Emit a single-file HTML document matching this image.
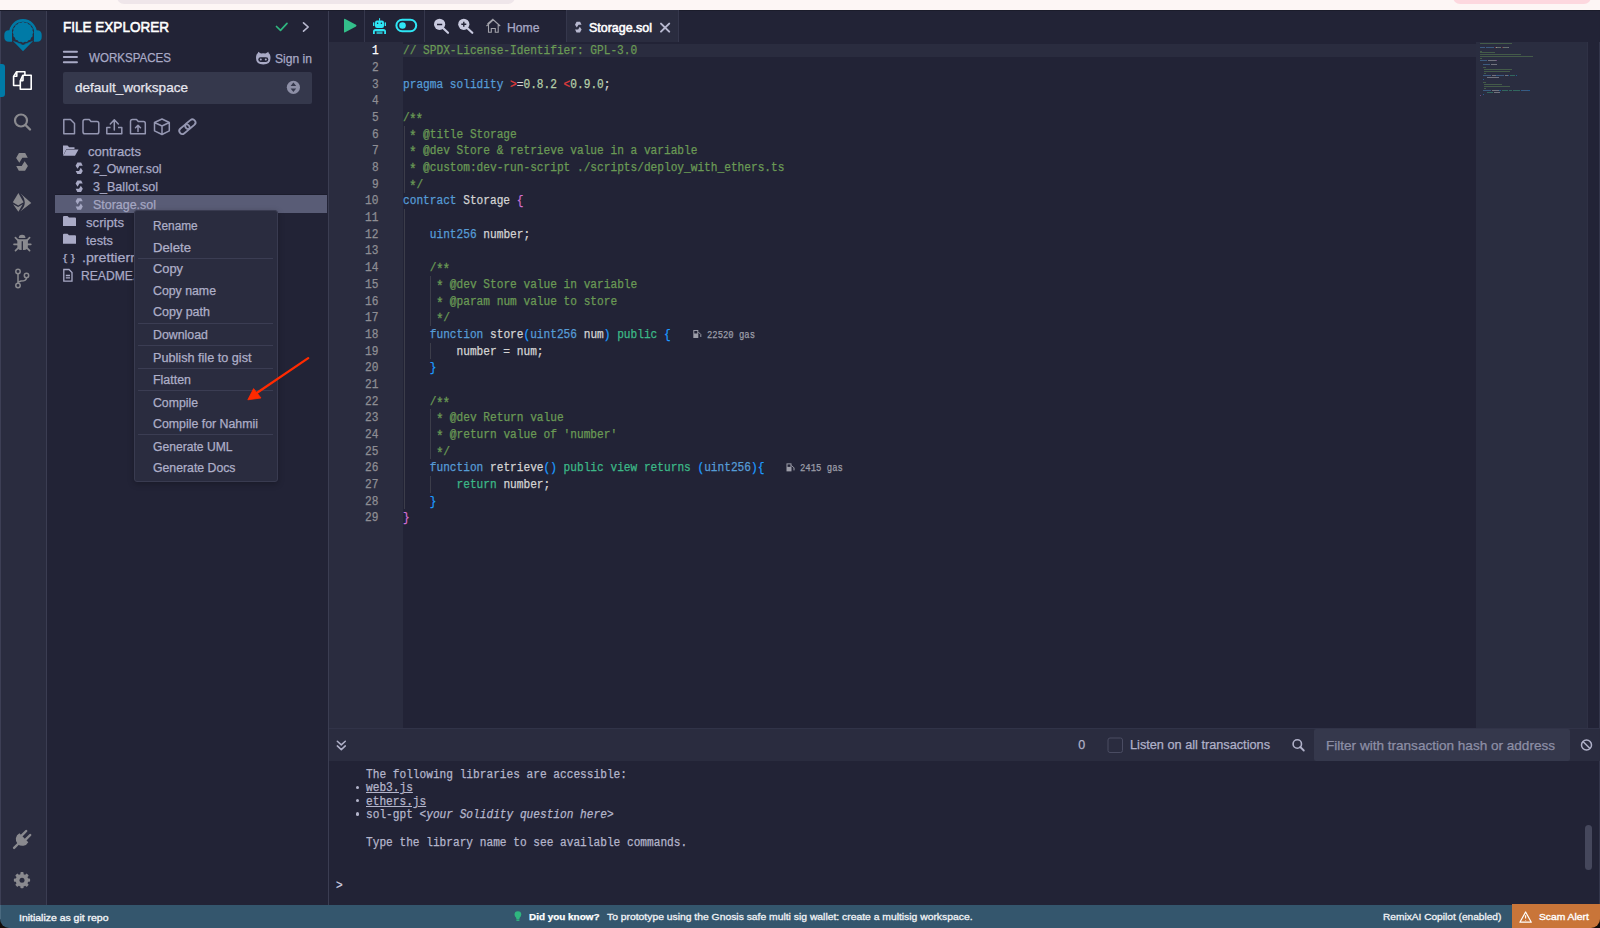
<!DOCTYPE html>
<html><head><meta charset="utf-8">
<style>
*{box-sizing:border-box;margin:0;padding:0}
html,body{width:1600px;height:928px;overflow:hidden;background:#120c0a}
body{position:relative;font-family:"Liberation Sans",sans-serif;color:#babbcc}
div,span,svg{position:absolute}
.t{white-space:pre;line-height:1;-webkit-text-stroke-width:0.25px}
svg{overflow:visible}
.cl span{position:static}
</style></head><body>

<div style="left:0;top:0;width:1600px;height:10px;background:#fdf6f5"></div>
<div style="left:117px;top:-10px;width:398px;height:14px;background:#efe6ea;border-radius:7px"></div>
<div style="left:1453px;top:-10px;width:138px;height:14px;background:#fdd8df;border-radius:7px"></div>
<div style="left:0;top:10px;width:46px;height:895px;background:#2a2c3f"></div>
<div style="left:0;top:10px;width:1px;height:895px;background:#3d3f55"></div>
<div style="left:46px;top:10px;width:1px;height:895px;background:#3b3d52"></div>
<div style="left:47px;top:10px;width:281px;height:895px;background:#222336"></div>
<div style="left:328px;top:10px;width:1px;height:895px;background:#3b3d52"></div>
<div style="left:329px;top:10px;width:1271px;height:895px;background:#222336"></div>
<div style="left:0;top:10px;width:1600px;height:1px;background:#1b1c2b"></div>
<svg style="left:0;top:0" width="46" height="60" viewBox="0 0 46 60">
<path d="M10.4 33 A12.6 12.6 0 0 1 35.6 33" fill="none" stroke="#007aa6" stroke-width="2.7"/>
<path d="M9 30.3 Q4.3 30.3 4.3 35 V37 Q4.3 41.8 9 41.8 H12 V30.3 Z" fill="#007aa6"/>
<path d="M37 30.3 Q41.7 30.3 41.7 35 V37 Q41.7 41.8 37 41.8 H34 V30.3 Z" fill="#007aa6"/>
<path d="M13.5 41.5 L23 51.2 L32.5 41.5 L23 45 Z" fill="#007aa6"/>
<path d="M33.50 32.30 L32.51 34.19 L32.70 36.32 L31.07 37.69 L30.42 39.72 L28.39 40.37 L27.02 42.00 L24.89 41.81 L23.00 42.80 L21.11 41.81 L18.98 42.00 L17.61 40.37 L15.58 39.72 L14.93 37.69 L13.30 36.32 L13.49 34.19 L12.50 32.30 L13.49 30.41 L13.30 28.28 L14.93 26.91 L15.58 24.88 L17.61 24.23 L18.98 22.60 L21.11 22.79 L23.00 21.80 L24.89 22.79 L27.02 22.60 L28.39 24.23 L30.42 24.88 L31.07 26.91 L32.70 28.28 L32.51 30.41 Z" fill="#007aa6"/>
<path d="M12 40.5 Q23 48 34 40.5 L23 44.5 Z" fill="#007aa6"/>
</svg>
<div style="left:0;top:64px;width:5px;height:33px;background:#007aa6;border-radius:0 3px 3px 0"></div>
<svg style="left:0;top:0" width="46" height="100" viewBox="0 0 46 100" fill="none" stroke="#fff" stroke-width="1.6" stroke-linejoin="round">
<path d="M20.3 85.5 H13.6 V76.4 L16.6 71.7 H24.9 V75.2"/>
<path d="M13.8 76.2 H16.8 V72"/>
<path d="M22.8 75.3 H31.2 V89.2 H20.3 V80.8 Z"/>
<path d="M20.5 80.6 H23 V75.6"/>
</svg>
<svg style="left:0;top:0" width="46" height="140" viewBox="0 0 46 140">
<circle cx="21" cy="120.5" r="6" fill="none" stroke="#8a8a8f" stroke-width="2.2"/>
<path d="M25.5 125 L30 129.5" stroke="#8a8a8f" stroke-width="2.4" stroke-linecap="round"/>
</svg>
<svg style="left:0;top:0" width="46" height="220" viewBox="0 0 46 220">
<path d="M18.4 193.1 L23.6 202.3 L18.2 205.6 L12.8 202.2 Z" fill="#8a8a8f"/>
<path d="M13.1 204.3 L18.1 206.9 L22.8 204.3 L18.4 211.8 Z" fill="#8a8a8f"/>
<path d="M20.5 193.4 L31.3 202.9 L20.2 211.6 Q24.8 207 24.8 202.6 Q24.8 198 20.5 193.4 Z" fill="#8a8a8f"/>
</svg>
<svg style="left:0;top:0" width="46" height="260" viewBox="0 0 46 260">
<path d="M18.7 238.1 A3.4 3.4 0 0 1 25.5 238.1 Z" fill="#8a8a8f"/>
<path d="M17.3 239.3 H27.9 V246 Q27.9 250 24 250 H20.8 Q17.3 250 17.3 246 Z" fill="#8a8a8f"/>
<path d="M15.4 237.6 L18.6 240.8 M29.6 237.6 L26.6 240.8 M14 244.3 L17.8 244.3 M30.8 244.3 L27.4 244.3 M15.5 250.6 L18.8 247.3 M29.6 250.6 L26.4 247.3" stroke="#8a8a8f" stroke-width="1.7" stroke-linecap="round"/>
<path d="M22.3 241.2 L22.3 250.5" stroke="#2a2c3f" stroke-width="1.3"/>
</svg>
<svg style="left:0;top:0" width="46" height="300" viewBox="0 0 46 300">
<circle cx="18" cy="271.5" r="2.2" fill="none" stroke="#8a8a8f" stroke-width="1.5"/>
<circle cx="26.5" cy="275.5" r="2.2" fill="none" stroke="#8a8a8f" stroke-width="1.5"/>
<circle cx="18" cy="285.5" r="2.2" fill="none" stroke="#8a8a8f" stroke-width="1.5"/>
<path d="M18 273.7 L18 283.3 M26.5 277.7 Q26.5 281 21 281 L18.5 282" fill="none" stroke="#8a8a8f" stroke-width="1.5"/>
</svg>
<svg style="left:0;top:0" width="46" height="900" viewBox="0 0 46 900">
<path d="M19.42 833.32 L28.28 842.18 A6.6 6.6 0 1 1 19.42 833.32 Z" fill="#8a8a8f"/>
<path d="M21.6 835.6 L26.2 831 M25.6 839.6 L30.2 835 M18.5 843.5 L14.1 847.9" stroke="#8a8a8f" stroke-width="2.4" stroke-linecap="round"/>
</svg>
<svg style="left:0;top:0" width="46" height="900" viewBox="0 0 46 900">
<g transform="translate(22 880.2)">
<circle r="6.3" fill="#8a8a8f"/><rect x="-1.6" y="-8.1" width="3.2" height="4" rx="0.8" transform="rotate(0)" fill="#8a8a8f"/><rect x="-1.6" y="-8.1" width="3.2" height="4" rx="0.8" transform="rotate(45)" fill="#8a8a8f"/><rect x="-1.6" y="-8.1" width="3.2" height="4" rx="0.8" transform="rotate(90)" fill="#8a8a8f"/><rect x="-1.6" y="-8.1" width="3.2" height="4" rx="0.8" transform="rotate(135)" fill="#8a8a8f"/><rect x="-1.6" y="-8.1" width="3.2" height="4" rx="0.8" transform="rotate(180)" fill="#8a8a8f"/><rect x="-1.6" y="-8.1" width="3.2" height="4" rx="0.8" transform="rotate(225)" fill="#8a8a8f"/><rect x="-1.6" y="-8.1" width="3.2" height="4" rx="0.8" transform="rotate(270)" fill="#8a8a8f"/><rect x="-1.6" y="-8.1" width="3.2" height="4" rx="0.8" transform="rotate(315)" fill="#8a8a8f"/>
<circle r="2.5" fill="#2a2c3f"/>
</g></svg>
<div class="t" style="left:62.50px;top:19.45px;font-family:'Liberation Sans';font-size:15px;color:#ffffff;font-weight:normal;font-style:normal;transform-origin:0 0;transform:scaleX(0.9018);-webkit-text-stroke:0.6px #fff;">FILE EXPLORER</div>
<svg style="left:0;top:0" width="330" height="70">
<path d="M276.5 26.5 L280.5 30.3 L287 23.3" fill="none" stroke="#2fb67f" stroke-width="1.7" stroke-linecap="round" stroke-linejoin="round"/>
<path d="M303.5 22.8 L308.2 27 L303.5 31.2" fill="none" stroke="#b9b9d0" stroke-width="1.6" stroke-linecap="round" stroke-linejoin="round"/>
<path d="M63.8 51.8 H77 M63.8 57 H77 M63.8 62.2 H77" stroke="#a9aac6" stroke-width="1.9" stroke-linecap="round"/>
<path d="M256 58 Q256 54 258 53 L258 51.8 L261 53.5 Q263 53 265.5 53.5 L268.5 51.8 L268.5 53 Q270.5 54 270.5 58 Q270.5 64.5 263.3 64.5 Q256 64.5 256 58 Z" fill="#a9aac6"/>
<rect x="258.3" y="57.3" width="10" height="4.6" rx="2.3" fill="#222336"/>
<circle cx="260.8" cy="59.6" r="1" fill="#a9aac6"/><circle cx="265.8" cy="59.6" r="1" fill="#a9aac6"/>
</svg>
<div class="t" style="left:88.90px;top:50.85px;font-family:'Liberation Sans';font-size:13px;color:#a9aac6;font-weight:normal;font-style:normal;transform-origin:0 0;transform:scaleX(0.8892);">WORKSPACES</div>
<div class="t" style="left:275.20px;top:51.85px;font-family:'Liberation Sans';font-size:13px;color:#a9aac6;font-weight:normal;font-style:normal;transform-origin:0 0;transform:scaleX(0.9308);">Sign in</div>
<div style="left:63px;top:71.5px;width:248.5px;height:32px;background:#35384c;border-radius:2px"></div>
<div class="t" style="left:74.90px;top:80.83px;font-family:'Liberation Sans';font-size:13.5px;color:#e6e6ee;font-weight:normal;font-style:normal;transform-origin:0 0;transform:scaleX(1.0037);">default_workspace</div>
<svg style="left:0;top:0" width="330" height="140">
<circle cx="293.4" cy="87.3" r="6.6" fill="#8d8fa6"/>
<path d="M290.6 86 L293.4 82.6 L296.2 86 Z M290.6 88.6 L293.4 92 L296.2 88.6 Z" fill="#35384c"/>
</svg>
<svg style="left:0;top:0" width="330" height="140" fill="none" stroke="#9597b2" stroke-width="1.5" stroke-linejoin="round">
<path d="M63.8 119.5 H70.5 L74.5 123.5 V133.8 H63.8 Z"/>
<path d="M83 121.5 Q83 119.5 85 119.5 H89.3 L91 121.5 H97 Q98.8 121.5 98.8 123.5 V132 Q98.8 133.8 97 133.8 H85 Q83 133.8 83 132 Z"/>
<path d="M114.3 130 V120 M110.3 124 L114.3 119.8 L118.3 124" stroke-linecap="round"/>
<path d="M110.5 127.5 H106.8 V133.8 H121.8 V127.5 H118"/>
<path d="M130.5 121.5 Q130.5 119.5 132.5 119.5 H136.5 L138.3 121.5 H143.5 Q145.3 121.5 145.3 123.5 V133.8 H130.5 Z"/>
<path d="M138 131.5 V125.3 M135.5 127.8 L138 125.3 L140.5 127.8" stroke-linecap="round"/>
<path d="M162 119 L169.3 122.5 V130.8 L162 134.5 L154.5 130.8 V122.5 Z M154.5 122.5 L162 126 L169.3 122.5 M162 126 V134.5"/>
<g transform="translate(187.4 126.7) rotate(-40)" stroke-width="1.8">
<rect x="-9.6" y="-3.1" width="11.5" height="6.2" rx="3.1"/>
<rect x="-1.9" y="-3.1" width="11.5" height="6.2" rx="3.1"/>
</g>
</svg>
<div style="left:55px;top:194px;width:272px;height:1px;background:#1c1d2d"></div>
<div style="left:55px;top:195px;width:272px;height:18.2px;background:#595c76"></div>
<svg style="left:0;top:0" width="330" height="300">
<path d="M63 145.5 H67.5 L69.2 147.3 H74.5 V149 H66.5 L63 155.8 Z" fill="#a9aac6"/>
<path d="M66.5 149.5 H78.5 L75 155.8 H63.2 Z" fill="#a9aac6"/>
</svg>
<svg style="left:0;top:0" width="700" height="300"><path d="M18.95 153.00 L25.19 153.00 L27.78 157.77 L22.33 157.77 L19.35 162.69 L16.10 157.91 Z M25.05 170.82 L18.82 170.82 L16.23 166.05 L21.68 166.05 L24.66 161.14 L27.91 165.91 Z" fill="#8a8a8f"/></svg>
<svg style="left:0;top:0" width="700" height="300"><path d="M77.34 162.60 L81.14 162.60 L82.72 165.68 L79.40 165.68 L77.58 168.85 L75.60 165.77 Z M81.06 174.10 L77.26 174.10 L75.68 171.02 L79.00 171.02 L80.82 167.85 L82.80 170.93 Z" fill="#a9aac6"/></svg>
<svg style="left:0;top:0" width="700" height="300"><path d="M77.34 180.40 L81.14 180.40 L82.72 183.48 L79.40 183.48 L77.58 186.65 L75.60 183.57 Z M81.06 191.90 L77.26 191.90 L75.68 188.82 L79.00 188.82 L80.82 185.65 L82.80 188.73 Z" fill="#a9aac6"/></svg>
<svg style="left:0;top:0" width="700" height="300"><path d="M77.34 198.20 L81.14 198.20 L82.72 201.28 L79.40 201.28 L77.58 204.45 L75.60 201.37 Z M81.06 209.70 L77.26 209.70 L75.68 206.62 L79.00 206.62 L80.82 203.45 L82.80 206.53 Z" fill="#a5a7c3"/></svg>
<div class="t" style="left:87.50px;top:144.75px;font-family:'Liberation Sans';font-size:13px;color:#a9aac6;font-weight:normal;font-style:normal;transform-origin:0 0;transform:scaleX(1.0047);">contracts</div>
<div class="t" style="left:93.10px;top:162.05px;font-family:'Liberation Sans';font-size:13px;color:#a9aac6;font-weight:normal;font-style:normal;transform-origin:0 0;transform:scaleX(0.9479);">2_Owner.sol</div>
<div class="t" style="left:93.10px;top:179.85px;font-family:'Liberation Sans';font-size:13px;color:#a9aac6;font-weight:normal;font-style:normal;transform-origin:0 0;transform:scaleX(0.9670);">3_Ballot.sol</div>
<div class="t" style="left:93.10px;top:197.65px;font-family:'Liberation Sans';font-size:13px;color:#a5a7c3;font-weight:normal;font-style:normal;transform-origin:0 0;transform:scaleX(0.9579);">Storage.sol</div>
<svg style="left:0;top:0" width="330" height="300">
<path d="M63 217 Q63 216 64 216 H67.5 L69 217.5 H75 Q76 217.5 76 218.5 V226 H63 Z" fill="#a9aac6"/>
<path d="M63 234.7 Q63 233.7 64 233.7 H67.5 L69 235.2 H75 Q76 235.2 76 236.2 V243.7 H63 Z" fill="#a9aac6"/>
</svg>
<div class="t" style="left:86.20px;top:216.25px;font-family:'Liberation Sans';font-size:13px;color:#a9aac6;font-weight:normal;font-style:normal;transform-origin:0 0;transform:scaleX(1.0116);">scripts</div>
<div class="t" style="left:86.20px;top:233.95px;font-family:'Liberation Sans';font-size:13px;color:#a9aac6;font-weight:normal;font-style:normal;transform-origin:0 0;transform:scaleX(0.9829);">tests</div>
<div class="t" style="left:62.80px;top:252.93px;font-family:'Liberation Sans';font-size:9.5px;color:#a9aac6;font-weight:normal;font-style:normal;transform-origin:0 0;transform:scaleX(1.3333);">{ }</div>
<div class="t" style="left:81.50px;top:250.95px;font-family:'Liberation Sans';font-size:13px;color:#a9aac6;font-weight:normal;font-style:normal;transform-origin:0 0;transform:scaleX(1.0928);">.prettierrc</div>
<svg style="left:0;top:0" width="330" height="300" fill="none" stroke="#a9aac6" stroke-width="1.3">
<path d="M63.8 269.5 H69 L72 272.5 V281.2 H63.8 Z"/><path d="M65.8 275.5 H70 M65.8 277.8 H70" />
</svg>
<div class="t" style="left:81.20px;top:268.65px;font-family:'Liberation Sans';font-size:13px;color:#a9aac6;font-weight:normal;font-style:normal;transform-origin:0 0;transform:scaleX(0.9315);">README.md</div>
<div style="left:133.5px;top:210.2px;width:144px;height:272px;background:#2a2c3f;border:1px solid #393b50;border-radius:3px;box-shadow:0 2px 6px rgba(0,0,0,.25)"></div>
<div class="t" style="left:153.30px;top:219.68px;font-family:'Liberation Sans';font-size:12.5px;color:#aeafc8;font-weight:normal;font-style:normal;transform-origin:0 0;transform:scaleX(0.9460);">Rename</div>
<div class="t" style="left:153.30px;top:241.58px;font-family:'Liberation Sans';font-size:12.5px;color:#aeafc8;font-weight:normal;font-style:normal;transform-origin:0 0;transform:scaleX(1.0514);">Delete</div>
<div class="t" style="left:153.30px;top:263.47px;font-family:'Liberation Sans';font-size:12.5px;color:#aeafc8;font-weight:normal;font-style:normal;transform-origin:0 0;transform:scaleX(1.0278);">Copy</div>
<div class="t" style="left:153.30px;top:284.97px;font-family:'Liberation Sans';font-size:12.5px;color:#aeafc8;font-weight:normal;font-style:normal;transform-origin:0 0;transform:scaleX(0.9853);">Copy name</div>
<div class="t" style="left:153.30px;top:306.47px;font-family:'Liberation Sans';font-size:12.5px;color:#aeafc8;font-weight:normal;font-style:normal;transform-origin:0 0;transform:scaleX(1.0003);">Copy path</div>
<div class="t" style="left:153.30px;top:328.67px;font-family:'Liberation Sans';font-size:12.5px;color:#aeafc8;font-weight:normal;font-style:normal;transform-origin:0 0;transform:scaleX(0.9893);">Download</div>
<div class="t" style="left:153.30px;top:351.67px;font-family:'Liberation Sans';font-size:12.5px;color:#aeafc8;font-weight:normal;font-style:normal;transform-origin:0 0;transform:scaleX(1.0125);">Publish file to gist</div>
<div class="t" style="left:153.30px;top:374.38px;font-family:'Liberation Sans';font-size:12.5px;color:#aeafc8;font-weight:normal;font-style:normal;transform-origin:0 0;transform:scaleX(0.9943);">Flatten</div>
<div class="t" style="left:153.30px;top:396.52px;font-family:'Liberation Sans';font-size:12.5px;color:#aeafc8;font-weight:normal;font-style:normal;transform-origin:0 0;transform:scaleX(0.9813);">Compile</div>
<div class="t" style="left:153.30px;top:418.07px;font-family:'Liberation Sans';font-size:12.5px;color:#aeafc8;font-weight:normal;font-style:normal;transform-origin:0 0;transform:scaleX(0.9879);">Compile for Nahmii</div>
<div class="t" style="left:153.30px;top:440.67px;font-family:'Liberation Sans';font-size:12.5px;color:#aeafc8;font-weight:normal;font-style:normal;transform-origin:0 0;transform:scaleX(0.9697);">Generate UML</div>
<div class="t" style="left:153.30px;top:462.17px;font-family:'Liberation Sans';font-size:12.5px;color:#aeafc8;font-weight:normal;font-style:normal;transform-origin:0 0;transform:scaleX(0.9812);">Generate Docs</div>
<div style="left:138px;top:257.6px;width:135px;height:1px;background:#3b3d53"></div>
<div style="left:138px;top:323.0px;width:135px;height:1px;background:#3b3d53"></div>
<div style="left:138px;top:345.1px;width:135px;height:1px;background:#3b3d53"></div>
<div style="left:138px;top:367.8px;width:135px;height:1px;background:#3b3d53"></div>
<div style="left:138px;top:390.0px;width:135px;height:1px;background:#3b3d53"></div>
<div style="left:138px;top:434.1px;width:135px;height:1px;background:#3b3d53"></div>
<svg style="left:0;top:0" width="330" height="420">
<path d="M308.2 358.1 L256 393.5" stroke="#ff2a00" stroke-width="2.3" stroke-linecap="round"/>
<path d="M247.8 399.8 L253.6 388.6 L261 398 Z" fill="#ff2a00" stroke="#ff2a00" stroke-width="0.8" stroke-linejoin="round"/>
</svg>
<div style="left:364px;top:10px;width:1px;height:32px;background:#35374c"></div>
<div style="left:424px;top:10px;width:1px;height:32px;background:#35374c"></div>
<div style="left:566px;top:10px;width:113px;height:32px;background:#2a2c3f;border-left:1px solid #35374c;border-right:1px solid #35374c"></div>
<svg style="left:0;top:0" width="700" height="42">
<path d="M344 19.5 Q344 18.3 345.2 18.9 L356 24.8 Q357 25.6 356 26.4 L345.2 32.3 Q344 32.9 344 31.7 Z" fill="#33bf8a"/>
<rect x="375" y="20.5" width="9" height="7.5" rx="2" fill="#2ee6f5"/>
<rect x="373" y="22.2" width="1.4" height="3.8" rx="0.6" fill="#2ee6f5"/>
<rect x="384.6" y="22.2" width="1.4" height="3.8" rx="0.6" fill="#2ee6f5"/>
<rect x="379" y="18.2" width="1.1" height="2.5" fill="#2ee6f5"/>
<circle cx="377.6" cy="23.3" r="0.8" fill="#222336"/><circle cx="381.4" cy="23.3" r="0.8" fill="#222336"/>
<path d="M373 34 V31.5 Q373 29 375.5 29 H383.5 Q386 29 386 31.5 V34 H384.2 V31.2 H374.8 V34 Z" fill="#2ee6f5"/>
<rect x="376.5" y="31.5" width="6" height="2.5" fill="#2ee6f5" opacity=".7"/>
<rect x="396.4" y="19.7" width="19.8" height="11.6" rx="5.8" fill="none" stroke="#2ee6f5" stroke-width="2"/>
<circle cx="402.5" cy="25.5" r="3.3" fill="#2ee6f5"/>
<g fill="#c9cadf" stroke="#c9cadf">
<circle cx="439.6" cy="24.3" r="5.6" stroke="none"/>
<path d="M443.5 28.5 L448 32.8" stroke-width="2.2" stroke-linecap="round"/>
<circle cx="463.8" cy="24.3" r="5.6" stroke="none"/>
<path d="M467.7 28.5 L472.3 32.8" stroke-width="2.2" stroke-linecap="round"/>
</g>
<path d="M437 24.5 H442.2" stroke="#222336" stroke-width="1.5"/>
<path d="M461.3 24.3 H466.3 M463.8 21.8 V26.8" stroke="#222336" stroke-width="1.4"/>
<path d="M486.5 26 L493.3 19.8 L500.2 26 M488.5 24.5 V32.2 H491.3 V28.5 H495.3 V32.2 H498.2 V24.5 M487.5 24 L493.3 18.8" fill="none" stroke="#a3a3ab" stroke-width="1.1"/>
<path d="M661 23.6 L669.2 31.6 M669.2 23.6 L661 31.6" stroke="#b8b9d0" stroke-width="2" stroke-linecap="round"/>
</svg>
<svg style="left:0;top:0" width="700" height="300"><path d="M576.60 21.80 L580.10 21.80 L581.55 24.63 L578.50 24.63 L576.82 27.55 L575.00 24.72 Z M580.02 32.38 L576.53 32.38 L575.07 29.55 L578.13 29.55 L579.80 26.63 L581.62 29.46 Z" fill="#b8b9d0"/></svg>
<div class="t" style="left:506.80px;top:22.27px;font-family:'Liberation Sans';font-size:12.5px;color:#a9aac6;font-weight:normal;font-style:normal;transform-origin:0 0;transform:scaleX(0.9747);">Home</div>
<div class="t" style="left:589.30px;top:22.27px;font-family:'Liberation Sans';font-size:12.5px;color:#ffffff;font-weight:normal;font-style:normal;transform-origin:0 0;transform:scaleX(0.9963);-webkit-text-stroke:0.55px #fff;">Storage.sol</div>
<div style="left:329px;top:42px;width:74px;height:686px;background:#2a2c3f"></div>
<div style="left:1476px;top:42px;width:111px;height:686px;background:#2a2d40"></div>
<div style="left:1587px;top:42px;width:1px;height:686px;background:#2f3145"></div>
<div style="left:1599px;top:42px;width:1px;height:863px;background:#33354a"></div>
<div style="left:403px;top:43.5px;width:1073px;height:13.5px;background:#2a2c3f"></div>
<div class="t" style="left:372.11px;top:45.38px;font-family:'Liberation Mono';font-size:12px;color:#ffffff;transform:scaleX(0.9292);transform-origin:0 0">1</div>
<div class="t" style="left:372.11px;top:62.05px;font-family:'Liberation Mono';font-size:12px;color:#8e8e94;transform:scaleX(0.9292);transform-origin:0 0">2</div>
<div class="t" style="left:372.11px;top:78.73px;font-family:'Liberation Mono';font-size:12px;color:#8e8e94;transform:scaleX(0.9292);transform-origin:0 0">3</div>
<div class="t" style="left:372.11px;top:95.41px;font-family:'Liberation Mono';font-size:12px;color:#8e8e94;transform:scaleX(0.9292);transform-origin:0 0">4</div>
<div class="t" style="left:372.11px;top:112.08px;font-family:'Liberation Mono';font-size:12px;color:#8e8e94;transform:scaleX(0.9292);transform-origin:0 0">5</div>
<div class="t" style="left:372.11px;top:128.75px;font-family:'Liberation Mono';font-size:12px;color:#8e8e94;transform:scaleX(0.9292);transform-origin:0 0">6</div>
<div class="t" style="left:372.11px;top:145.43px;font-family:'Liberation Mono';font-size:12px;color:#8e8e94;transform:scaleX(0.9292);transform-origin:0 0">7</div>
<div class="t" style="left:372.11px;top:162.11px;font-family:'Liberation Mono';font-size:12px;color:#8e8e94;transform:scaleX(0.9292);transform-origin:0 0">8</div>
<div class="t" style="left:372.11px;top:178.78px;font-family:'Liberation Mono';font-size:12px;color:#8e8e94;transform:scaleX(0.9292);transform-origin:0 0">9</div>
<div class="t" style="left:365.42px;top:195.46px;font-family:'Liberation Mono';font-size:12px;color:#8e8e94;transform:scaleX(0.9292);transform-origin:0 0">10</div>
<div class="t" style="left:365.42px;top:212.13px;font-family:'Liberation Mono';font-size:12px;color:#8e8e94;transform:scaleX(0.9292);transform-origin:0 0">11</div>
<div class="t" style="left:365.42px;top:228.81px;font-family:'Liberation Mono';font-size:12px;color:#8e8e94;transform:scaleX(0.9292);transform-origin:0 0">12</div>
<div class="t" style="left:365.42px;top:245.48px;font-family:'Liberation Mono';font-size:12px;color:#8e8e94;transform:scaleX(0.9292);transform-origin:0 0">13</div>
<div class="t" style="left:365.42px;top:262.15px;font-family:'Liberation Mono';font-size:12px;color:#8e8e94;transform:scaleX(0.9292);transform-origin:0 0">14</div>
<div class="t" style="left:365.42px;top:278.83px;font-family:'Liberation Mono';font-size:12px;color:#8e8e94;transform:scaleX(0.9292);transform-origin:0 0">15</div>
<div class="t" style="left:365.42px;top:295.50px;font-family:'Liberation Mono';font-size:12px;color:#8e8e94;transform:scaleX(0.9292);transform-origin:0 0">16</div>
<div class="t" style="left:365.42px;top:312.18px;font-family:'Liberation Mono';font-size:12px;color:#8e8e94;transform:scaleX(0.9292);transform-origin:0 0">17</div>
<div class="t" style="left:365.42px;top:328.86px;font-family:'Liberation Mono';font-size:12px;color:#8e8e94;transform:scaleX(0.9292);transform-origin:0 0">18</div>
<div class="t" style="left:365.42px;top:345.53px;font-family:'Liberation Mono';font-size:12px;color:#8e8e94;transform:scaleX(0.9292);transform-origin:0 0">19</div>
<div class="t" style="left:365.42px;top:362.20px;font-family:'Liberation Mono';font-size:12px;color:#8e8e94;transform:scaleX(0.9292);transform-origin:0 0">20</div>
<div class="t" style="left:365.42px;top:378.88px;font-family:'Liberation Mono';font-size:12px;color:#8e8e94;transform:scaleX(0.9292);transform-origin:0 0">21</div>
<div class="t" style="left:365.42px;top:395.56px;font-family:'Liberation Mono';font-size:12px;color:#8e8e94;transform:scaleX(0.9292);transform-origin:0 0">22</div>
<div class="t" style="left:365.42px;top:412.23px;font-family:'Liberation Mono';font-size:12px;color:#8e8e94;transform:scaleX(0.9292);transform-origin:0 0">23</div>
<div class="t" style="left:365.42px;top:428.91px;font-family:'Liberation Mono';font-size:12px;color:#8e8e94;transform:scaleX(0.9292);transform-origin:0 0">24</div>
<div class="t" style="left:365.42px;top:445.58px;font-family:'Liberation Mono';font-size:12px;color:#8e8e94;transform:scaleX(0.9292);transform-origin:0 0">25</div>
<div class="t" style="left:365.42px;top:462.25px;font-family:'Liberation Mono';font-size:12px;color:#8e8e94;transform:scaleX(0.9292);transform-origin:0 0">26</div>
<div class="t" style="left:365.42px;top:478.93px;font-family:'Liberation Mono';font-size:12px;color:#8e8e94;transform:scaleX(0.9292);transform-origin:0 0">27</div>
<div class="t" style="left:365.42px;top:495.61px;font-family:'Liberation Mono';font-size:12px;color:#8e8e94;transform:scaleX(0.9292);transform-origin:0 0">28</div>
<div class="t" style="left:365.42px;top:512.28px;font-family:'Liberation Mono';font-size:12px;color:#8e8e94;transform:scaleX(0.9292);transform-origin:0 0">29</div>
<div class="t cl" style="left:402.6px;top:45.38px;font-family:'Liberation Mono';font-size:12px;transform:scaleX(0.9292);transform-origin:0 0"><span style="color:#6a9a55">// SPDX-License-Identifier: GPL-3.0</span></div>
<div class="t cl" style="left:402.6px;top:78.73px;font-family:'Liberation Mono';font-size:12px;transform:scaleX(0.9292);transform-origin:0 0"><span style="color:#569cd6">pragma</span><span style="color:#d4d4d4"> </span><span style="color:#569cd6">solidity</span><span style="color:#d4d4d4"> </span><span style="color:#e03c3c">&gt;</span><span style="color:#d4d4d4">=</span><span style="color:#b5cea8">0.8.2</span><span style="color:#d4d4d4"> </span><span style="color:#e03c3c">&lt;</span><span style="color:#b5cea8">0.9.0</span><span style="color:#d4d4d4">;</span></div>
<div class="t cl" style="left:402.6px;top:112.08px;font-family:'Liberation Mono';font-size:12px;transform:scaleX(0.9292);transform-origin:0 0"><span style="color:#6a9a55">/<span style="display:inline-block;transform:translateY(2.3px) scale(1.15)">*</span><span style="display:inline-block;transform:translateY(2.3px) scale(1.15)">*</span></span></div>
<div class="t cl" style="left:402.6px;top:128.75px;font-family:'Liberation Mono';font-size:12px;transform:scaleX(0.9292);transform-origin:0 0"><span style="color:#6a9a55"> <span style="display:inline-block;transform:translateY(2.3px) scale(1.15)">*</span> @title Storage</span></div>
<div class="t cl" style="left:402.6px;top:145.43px;font-family:'Liberation Mono';font-size:12px;transform:scaleX(0.9292);transform-origin:0 0"><span style="color:#6a9a55"> <span style="display:inline-block;transform:translateY(2.3px) scale(1.15)">*</span> @dev Store &amp; retrieve value in a variable</span></div>
<div class="t cl" style="left:402.6px;top:162.11px;font-family:'Liberation Mono';font-size:12px;transform:scaleX(0.9292);transform-origin:0 0"><span style="color:#6a9a55"> <span style="display:inline-block;transform:translateY(2.3px) scale(1.15)">*</span> @custom:dev-run-script ./scripts/deploy_with_ethers.ts</span></div>
<div class="t cl" style="left:402.6px;top:178.78px;font-family:'Liberation Mono';font-size:12px;transform:scaleX(0.9292);transform-origin:0 0"><span style="color:#6a9a55"> <span style="display:inline-block;transform:translateY(2.3px) scale(1.15)">*</span>/</span></div>
<div class="t cl" style="left:402.6px;top:195.46px;font-family:'Liberation Mono';font-size:12px;transform:scaleX(0.9292);transform-origin:0 0"><span style="color:#569cd6">contract</span><span style="color:#d4d4d4"> Storage </span><span style="color:#d26fd2">{</span></div>
<div class="t cl" style="left:402.6px;top:228.81px;font-family:'Liberation Mono';font-size:12px;transform:scaleX(0.9292);transform-origin:0 0"><span style="color:#d4d4d4">    </span><span style="color:#569cd6">uint256</span><span style="color:#d4d4d4"> number;</span></div>
<div class="t cl" style="left:402.6px;top:262.15px;font-family:'Liberation Mono';font-size:12px;transform:scaleX(0.9292);transform-origin:0 0"><span style="color:#6a9a55">    /<span style="display:inline-block;transform:translateY(2.3px) scale(1.15)">*</span><span style="display:inline-block;transform:translateY(2.3px) scale(1.15)">*</span></span></div>
<div class="t cl" style="left:402.6px;top:278.83px;font-family:'Liberation Mono';font-size:12px;transform:scaleX(0.9292);transform-origin:0 0"><span style="color:#6a9a55">     <span style="display:inline-block;transform:translateY(2.3px) scale(1.15)">*</span> @dev Store value in variable</span></div>
<div class="t cl" style="left:402.6px;top:295.50px;font-family:'Liberation Mono';font-size:12px;transform:scaleX(0.9292);transform-origin:0 0"><span style="color:#6a9a55">     <span style="display:inline-block;transform:translateY(2.3px) scale(1.15)">*</span> @param num value to store</span></div>
<div class="t cl" style="left:402.6px;top:312.18px;font-family:'Liberation Mono';font-size:12px;transform:scaleX(0.9292);transform-origin:0 0"><span style="color:#6a9a55">     <span style="display:inline-block;transform:translateY(2.3px) scale(1.15)">*</span>/</span></div>
<div class="t cl" style="left:402.6px;top:328.86px;font-family:'Liberation Mono';font-size:12px;transform:scaleX(0.9292);transform-origin:0 0"><span style="color:#d4d4d4">    </span><span style="color:#569cd6">function</span><span style="color:#d4d4d4"> store</span><span style="color:#1d9bff">(</span><span style="color:#569cd6">uint256</span><span style="color:#d4d4d4"> num</span><span style="color:#1d9bff">)</span><span style="color:#d4d4d4"> </span><span style="color:#3cb887">public</span><span style="color:#d4d4d4"> </span><span style="color:#1d9bff">{</span></div>
<div class="t cl" style="left:402.6px;top:345.53px;font-family:'Liberation Mono';font-size:12px;transform:scaleX(0.9292);transform-origin:0 0"><span style="color:#d4d4d4">        number = num;</span></div>
<div class="t cl" style="left:402.6px;top:362.20px;font-family:'Liberation Mono';font-size:12px;transform:scaleX(0.9292);transform-origin:0 0"><span style="color:#d4d4d4">    </span><span style="color:#1d9bff">}</span></div>
<div class="t cl" style="left:402.6px;top:395.56px;font-family:'Liberation Mono';font-size:12px;transform:scaleX(0.9292);transform-origin:0 0"><span style="color:#6a9a55">    /<span style="display:inline-block;transform:translateY(2.3px) scale(1.15)">*</span><span style="display:inline-block;transform:translateY(2.3px) scale(1.15)">*</span></span></div>
<div class="t cl" style="left:402.6px;top:412.23px;font-family:'Liberation Mono';font-size:12px;transform:scaleX(0.9292);transform-origin:0 0"><span style="color:#6a9a55">     <span style="display:inline-block;transform:translateY(2.3px) scale(1.15)">*</span> @dev Return value</span></div>
<div class="t cl" style="left:402.6px;top:428.91px;font-family:'Liberation Mono';font-size:12px;transform:scaleX(0.9292);transform-origin:0 0"><span style="color:#6a9a55">     <span style="display:inline-block;transform:translateY(2.3px) scale(1.15)">*</span> @return value of &#x27;number&#x27;</span></div>
<div class="t cl" style="left:402.6px;top:445.58px;font-family:'Liberation Mono';font-size:12px;transform:scaleX(0.9292);transform-origin:0 0"><span style="color:#6a9a55">     <span style="display:inline-block;transform:translateY(2.3px) scale(1.15)">*</span>/</span></div>
<div class="t cl" style="left:402.6px;top:462.25px;font-family:'Liberation Mono';font-size:12px;transform:scaleX(0.9292);transform-origin:0 0"><span style="color:#d4d4d4">    </span><span style="color:#569cd6">function</span><span style="color:#d4d4d4"> retrieve</span><span style="color:#1d9bff">()</span><span style="color:#d4d4d4"> </span><span style="color:#3cb887">public</span><span style="color:#d4d4d4"> </span><span style="color:#3cb887">view</span><span style="color:#d4d4d4"> </span><span style="color:#3cb887">returns</span><span style="color:#d4d4d4"> </span><span style="color:#1d9bff">(</span><span style="color:#569cd6">uint256</span><span style="color:#1d9bff">)</span><span style="color:#1d9bff">{</span></div>
<div class="t cl" style="left:402.6px;top:478.93px;font-family:'Liberation Mono';font-size:12px;transform:scaleX(0.9292);transform-origin:0 0"><span style="color:#d4d4d4">        </span><span style="color:#3cb887">return</span><span style="color:#d4d4d4"> number;</span></div>
<div class="t cl" style="left:402.6px;top:495.61px;font-family:'Liberation Mono';font-size:12px;transform:scaleX(0.9292);transform-origin:0 0"><span style="color:#d4d4d4">    </span><span style="color:#1d9bff">}</span></div>
<div class="t cl" style="left:402.6px;top:512.28px;font-family:'Liberation Mono';font-size:12px;transform:scaleX(0.9292);transform-origin:0 0"><span style="color:#d26fd2">}</span></div>
<div style="left:403.5px;top:209.2px;width:1px;height:300.2px;background:#3c3d4a"></div>
<div style="left:403.5px;top:125.9px;width:1px;height:66.7px;background:#3c3d4a"></div>
<div style="left:430.3px;top:276.0px;width:1px;height:50.0px;background:#3c3d4a"></div>
<div style="left:430.3px;top:409.4px;width:1px;height:50.0px;background:#3c3d4a"></div>
<div style="left:430.3px;top:342.7px;width:1px;height:16.7px;background:#3c3d4a"></div>
<div style="left:430.3px;top:476.1px;width:1px;height:16.7px;background:#3c3d4a"></div>
<svg style="left:0;top:0" width="900" height="520"><path d="M693.3 329.975 H698.3 V337.975 H693.3 Z" fill="#9c9da8"/><rect x="694.3" y="330.975" width="3" height="2.5" fill="#222336"/><path d="M698.3 331.975 L700.8 334.475 V336.975" fill="none" stroke="#9c9da8" stroke-width="1"/></svg>
<div class="t" style="left:706.80px;top:330.68px;font-family:'Liberation Mono';font-size:10px;color:#9c9da8;font-weight:normal;font-style:normal;transform-origin:0 0;transform:scaleX(0.8886);">22520 gas</div>
<svg style="left:0;top:0" width="900" height="520"><path d="M786.5 463.375 H791.5 V471.375 H786.5 Z" fill="#9c9da8"/><rect x="787.5" y="464.375" width="3" height="2.5" fill="#222336"/><path d="M791.5 465.375 L794.0 467.875 V470.375" fill="none" stroke="#9c9da8" stroke-width="1"/></svg>
<div class="t" style="left:800.00px;top:464.07px;font-family:'Liberation Mono';font-size:10px;color:#9c9da8;font-weight:normal;font-style:normal;transform-origin:0 0;transform:scaleX(0.8955);">2415 gas</div>
<div style="left:1479.5px;top:43.0px;width:32.9px;height:1.0px;background:#6a9a55;opacity:.42"></div>
<div style="left:1479.5px;top:46.7px;width:5.6px;height:1.0px;background:#569cd6;opacity:.42"></div>
<div style="left:1486.1px;top:46.7px;width:7.5px;height:1.0px;background:#569cd6;opacity:.42"></div>
<div style="left:1494.5px;top:46.7px;width:0.9px;height:1.0px;background:#e03c3c;opacity:.42"></div>
<div style="left:1495.5px;top:46.7px;width:0.9px;height:1.0px;background:#d4d4d4;opacity:.42"></div>
<div style="left:1496.4px;top:46.7px;width:4.7px;height:1.0px;background:#b5cea8;opacity:.42"></div>
<div style="left:1502.1px;top:46.7px;width:0.9px;height:1.0px;background:#e03c3c;opacity:.42"></div>
<div style="left:1503.0px;top:46.7px;width:4.7px;height:1.0px;background:#b5cea8;opacity:.42"></div>
<div style="left:1507.7px;top:46.7px;width:0.9px;height:1.0px;background:#d4d4d4;opacity:.42"></div>
<div style="left:1479.5px;top:50.5px;width:2.8px;height:1.0px;background:#6a9a55;opacity:.42"></div>
<div style="left:1480.4px;top:52.4px;width:15.0px;height:1.0px;background:#6a9a55;opacity:.42"></div>
<div style="left:1480.4px;top:54.2px;width:40.4px;height:1.0px;background:#6a9a55;opacity:.42"></div>
<div style="left:1480.4px;top:56.1px;width:52.6px;height:1.0px;background:#6a9a55;opacity:.42"></div>
<div style="left:1480.4px;top:58.0px;width:1.9px;height:1.0px;background:#6a9a55;opacity:.42"></div>
<div style="left:1479.5px;top:59.8px;width:7.5px;height:1.0px;background:#569cd6;opacity:.42"></div>
<div style="left:1488.0px;top:59.8px;width:7.5px;height:1.0px;background:#d4d4d4;opacity:.42"></div>
<div style="left:1495.5px;top:59.8px;width:0.9px;height:1.0px;background:#d26fd2;opacity:.42"></div>
<div style="left:1483.3px;top:63.6px;width:6.6px;height:1.0px;background:#569cd6;opacity:.42"></div>
<div style="left:1490.8px;top:63.6px;width:6.6px;height:1.0px;background:#d4d4d4;opacity:.42"></div>
<div style="left:1483.3px;top:67.3px;width:2.8px;height:1.0px;background:#6a9a55;opacity:.42"></div>
<div style="left:1484.2px;top:69.2px;width:28.2px;height:1.0px;background:#6a9a55;opacity:.42"></div>
<div style="left:1484.2px;top:71.0px;width:25.4px;height:1.0px;background:#6a9a55;opacity:.42"></div>
<div style="left:1484.2px;top:72.9px;width:1.9px;height:1.0px;background:#6a9a55;opacity:.42"></div>
<div style="left:1483.3px;top:74.8px;width:7.5px;height:1.0px;background:#569cd6;opacity:.42"></div>
<div style="left:1491.7px;top:74.8px;width:4.7px;height:1.0px;background:#d4d4d4;opacity:.42"></div>
<div style="left:1496.4px;top:74.8px;width:0.9px;height:1.0px;background:#1d9bff;opacity:.42"></div>
<div style="left:1497.4px;top:74.8px;width:6.6px;height:1.0px;background:#569cd6;opacity:.42"></div>
<div style="left:1504.9px;top:74.8px;width:2.8px;height:1.0px;background:#d4d4d4;opacity:.42"></div>
<div style="left:1507.7px;top:74.8px;width:0.9px;height:1.0px;background:#1d9bff;opacity:.42"></div>
<div style="left:1509.6px;top:74.8px;width:5.6px;height:1.0px;background:#3cb887;opacity:.42"></div>
<div style="left:1516.2px;top:74.8px;width:0.9px;height:1.0px;background:#1d9bff;opacity:.42"></div>
<div style="left:1487.0px;top:76.7px;width:12.2px;height:1.0px;background:#d4d4d4;opacity:.42"></div>
<div style="left:1483.3px;top:78.5px;width:0.9px;height:1.0px;background:#1d9bff;opacity:.42"></div>
<div style="left:1483.3px;top:82.3px;width:2.8px;height:1.0px;background:#6a9a55;opacity:.42"></div>
<div style="left:1484.2px;top:84.1px;width:17.9px;height:1.0px;background:#6a9a55;opacity:.42"></div>
<div style="left:1484.2px;top:86.0px;width:25.4px;height:1.0px;background:#6a9a55;opacity:.42"></div>
<div style="left:1484.2px;top:87.9px;width:1.9px;height:1.0px;background:#6a9a55;opacity:.42"></div>
<div style="left:1483.3px;top:89.8px;width:7.5px;height:1.0px;background:#569cd6;opacity:.42"></div>
<div style="left:1491.7px;top:89.8px;width:7.5px;height:1.0px;background:#d4d4d4;opacity:.42"></div>
<div style="left:1499.2px;top:89.8px;width:1.9px;height:1.0px;background:#1d9bff;opacity:.42"></div>
<div style="left:1502.1px;top:89.8px;width:5.6px;height:1.0px;background:#3cb887;opacity:.42"></div>
<div style="left:1508.6px;top:89.8px;width:3.8px;height:1.0px;background:#3cb887;opacity:.42"></div>
<div style="left:1513.3px;top:89.8px;width:6.6px;height:1.0px;background:#3cb887;opacity:.42"></div>
<div style="left:1520.9px;top:89.8px;width:0.9px;height:1.0px;background:#1d9bff;opacity:.42"></div>
<div style="left:1521.8px;top:89.8px;width:6.6px;height:1.0px;background:#569cd6;opacity:.42"></div>
<div style="left:1528.4px;top:89.8px;width:0.9px;height:1.0px;background:#1d9bff;opacity:.42"></div>
<div style="left:1529.3px;top:89.8px;width:0.9px;height:1.0px;background:#1d9bff;opacity:.42"></div>
<div style="left:1487.0px;top:91.6px;width:5.6px;height:1.0px;background:#3cb887;opacity:.42"></div>
<div style="left:1493.6px;top:91.6px;width:6.6px;height:1.0px;background:#d4d4d4;opacity:.42"></div>
<div style="left:1483.3px;top:93.5px;width:0.9px;height:1.0px;background:#1d9bff;opacity:.42"></div>
<div style="left:1479.5px;top:95.4px;width:0.9px;height:1.0px;background:#d26fd2;opacity:.42"></div>
<div style="left:329px;top:728px;width:1271px;height:33px;background:#2a2c3f"></div>
<div style="left:329px;top:728px;width:1271px;height:1px;background:#313348"></div>
<svg style="left:0;top:0" width="1600" height="900">
<path d="M337.3 741.2 L341.3 744.9 L345.3 741.2 M337.3 745.9 L341.3 749.6 L345.3 745.9" fill="none" stroke="#b0b1c9" stroke-width="1.5" stroke-linecap="round" stroke-linejoin="round"/>
<rect x="1108" y="738" width="14.5" height="14.5" rx="2" fill="#2a2c3f" stroke="#4a4c62" stroke-width="1"/>
<circle cx="1297.3" cy="744" r="4.2" fill="none" stroke="#b0b1c9" stroke-width="1.6"/>
<path d="M1300.3 747 L1303.8 750.5" stroke="#b0b1c9" stroke-width="1.8" stroke-linecap="round"/>
<circle cx="1586.5" cy="745" r="5" fill="none" stroke="#b0b1c9" stroke-width="1.5"/>
<path d="M1583 741.5 L1590 748.5" stroke="#b0b1c9" stroke-width="1.5"/>
</svg>
<div class="t" style="left:1078.20px;top:738.88px;font-family:'Liberation Sans';font-size:12.5px;color:#b0b1c9;font-weight:normal;font-style:normal;transform-origin:0 0;">0</div>
<div class="t" style="left:1130.20px;top:738.88px;font-family:'Liberation Sans';font-size:12.5px;color:#b0b1c9;font-weight:normal;font-style:normal;transform-origin:0 0;transform:scaleX(1.0175);">Listen on all transactions</div>
<div style="left:1313.5px;top:729px;width:256px;height:32px;background:#35384c;border-radius:2px"></div>
<div class="t" style="left:1325.60px;top:738.95px;font-family:'Liberation Sans';font-size:13px;color:#8d8fa6;font-weight:normal;font-style:normal;transform-origin:0 0;transform:scaleX(1.0425);">Filter with transaction hash or address</div>
<div class="t cl" style="left:366.1px;top:768.88px;font-family:'Liberation Mono';font-size:12px;transform:scaleX(0.9292);transform-origin:0 0"><span style="color:#b4b5cb;">The following libraries are accessible:</span></div>
<div class="t cl" style="left:366.1px;top:782.48px;font-family:'Liberation Mono';font-size:12px;transform:scaleX(0.9292);transform-origin:0 0"><span style="color:#b4b5cb;text-decoration:underline">web3.js</span></div>
<div class="t cl" style="left:366.1px;top:795.78px;font-family:'Liberation Mono';font-size:12px;transform:scaleX(0.9292);transform-origin:0 0"><span style="color:#b4b5cb;text-decoration:underline">ethers.js</span></div>
<div class="t cl" style="left:366.1px;top:809.38px;font-family:'Liberation Mono';font-size:12px;transform:scaleX(0.9292);transform-origin:0 0"><span style="color:#b4b5cb;">sol-gpt </span><span style="color:#b4b5cb;font-style:italic">&lt;your Solidity question here&gt;</span></div>
<div class="t cl" style="left:366.1px;top:836.78px;font-family:'Liberation Mono';font-size:12px;transform:scaleX(0.9292);transform-origin:0 0"><span style="color:#b4b5cb;">Type the library name to see available commands.</span></div>
<div style="left:356.2px;top:785.5px;width:3.2px;height:3.2px;border-radius:50%;background:#b4b5cb"></div>
<div style="left:356.2px;top:798.8px;width:3.2px;height:3.2px;border-radius:50%;background:#b4b5cb"></div>
<div style="left:356.2px;top:812.4px;width:3.2px;height:3.2px;border-radius:50%;background:#b4b5cb"></div>
<div class="t cl" style="left:336.3px;top:880.38px;font-family:'Liberation Mono';font-size:12px;transform:scaleX(0.9292);transform-origin:0 0"><span style="color:#d0d0e0;">&gt;</span></div>
<div style="left:1585px;top:825px;width:7px;height:45px;background:#45475c;border-radius:3.5px"></div>
<div style="left:0;top:904px;width:1600px;height:24px;border-radius:0 0 9px 9px;overflow:hidden"><div style="left:0;top:1px;width:1512px;height:23px;background:#34566d"></div><div style="left:1512px;top:0;width:88px;height:24px;background:#c97539"></div></div>
<div style="left:0;top:905px;width:1px;height:14px;background:#4a6a80"></div>
<div class="t" style="left:18.60px;top:912.62px;font-family:'Liberation Sans';font-size:9.5px;color:#f0f2f5;font-weight:normal;font-style:normal;transform-origin:0 0;transform:scaleX(1.1005);-webkit-text-stroke:0.35px #f0f2f5;">Initialize as git repo</div>
<svg style="left:0;top:0" width="1600" height="928">
<path d="M517.9 911.2 Q521.3 911.2 521.3 914.6 Q521.3 916.3 519.5 918 V919 H516.3 V918 Q514.5 916.3 514.5 914.6 Q514.5 911.2 517.9 911.2 Z" fill="#2fb67f"/>
<rect x="516.4" y="919.4" width="3" height="1.5" fill="#2fb67f"/>
<path d="M1525.6 912 L1531.3 922.2 H1519.9 Z" fill="none" stroke="#fff" stroke-width="1.2" stroke-linejoin="round"/>
<path d="M1525.6 915.2 V918.6 M1525.6 919.9 V920.6" stroke="#fff" stroke-width="1.1"/>
</svg>
<div class="t" style="left:529.40px;top:912.42px;font-family:'Liberation Sans';font-size:9.5px;color:#ffffff;font-weight:bold;font-style:normal;transform-origin:0 0;transform:scaleX(1.0435);">Did you know?</div>
<div class="t" style="left:606.60px;top:912.42px;font-family:'Liberation Sans';font-size:9.5px;color:#f0f2f5;font-weight:normal;font-style:normal;transform-origin:0 0;transform:scaleX(1.0884);-webkit-text-stroke:0.3px #f0f2f5;">To prototype using the Gnosis safe multi sig wallet: create a multisig workspace.</div>
<div class="t" style="left:1382.90px;top:912.42px;font-family:'Liberation Sans';font-size:9.5px;color:#f0f2f5;font-weight:normal;font-style:normal;transform-origin:0 0;transform:scaleX(1.0677);-webkit-text-stroke:0.3px #f0f2f5;">RemixAI Copilot (enabled)</div>
<div class="t" style="left:1539.40px;top:912.42px;font-family:'Liberation Sans';font-size:9.5px;color:#ffffff;font-weight:normal;font-style:normal;transform-origin:0 0;transform:scaleX(1.0841);-webkit-text-stroke:0.35px #fff;">Scam Alert</div>
</body></html>
